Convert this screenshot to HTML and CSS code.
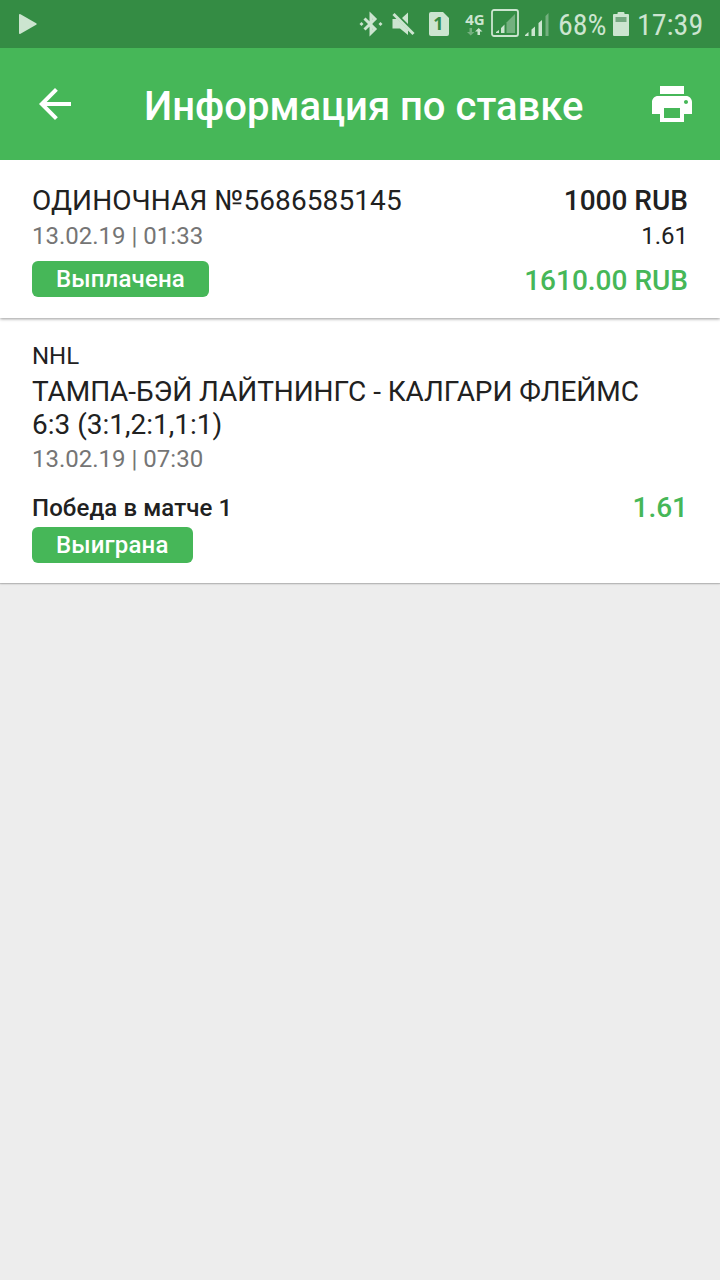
FILE: index.html
```html
<!DOCTYPE html>
<html lang="ru">
<head>
    <meta charset="UTF-8">
    <meta name="viewport" content="width=device-width, initial-scale=1.0">
    <title>Информация по ставке</title>
    <link rel="stylesheet" href="styles.css">
</head>
<body>
    <div class="status-bar">
        <svg class="play" width="20" height="22" viewBox="0 0 20 22"><path d="M1 2 Q1 0.5 2.5 1.2 L18.2 10.2 Q19.4 11 18.2 11.8 L2.5 20.8 Q1 21.5 1 20 Z"/></svg>
        <div class="status-icons">
            <svg class="bluetooth" width="24" height="26" viewBox="0 0 24 26">
                <path class="line" d="M5.5 7.5 L16 18 L12 22 V4 L16 8 L5.5 18.5"/>
                <path d="M0.5 13 L2.5 11 L4.5 13 L2.5 15 Z M19.5 13 L21.5 11 L23.5 13 L21.5 15 Z"/>
            </svg>
            <svg class="mute" width="24" height="26" viewBox="0 0 24 26">
                <path d="M0.5 8 H5 L16 19 V24 L8 17.5 H0.5 Z M16 1.5 V13 L10 7 Z"/>
                <path class="line" d="M1.5 3 L21.5 23"/>
            </svg>
            <svg class="sim" width="22" height="26" viewBox="0 0 22 26">
                <path d="M3 1 H15 L21 7 V23 Q21 25 19 25 H3 Q1 25 1 23 V3 Q1 1 3 1 Z"/>
                <text x="10.5" y="19" text-anchor="middle">1</text>
            </svg>
            <div class="network">
                <span>4G</span>
                <svg width="16" height="8" viewBox="0 0 16 8">
                    <path class="dim" d="M2.5 0 H5 V4 H7.5 L3.7 7.5 L0 4 H2.5 Z"/>
                    <path d="M10.5 7 H13 V3.5 H15.5 L11.7 0 L8 3.5 H10.5 Z"/>
                </svg>
            </div>
            <svg class="signal-box" width="28" height="28" viewBox="0 0 28 28">
                <rect class="frame" x="1" y="1" width="26" height="26" rx="2"/>
                <path d="M5 24 V23 L8 21 V24 Z M10 24 V19 L13.5 15.5 V24 Z"/>
                <path class="dim" d="M15.5 24 V13.5 L24 5 V24 Z"/>
            </svg>
            <svg class="signal" width="25" height="25" viewBox="0 0 25 25">
                <path d="M0 24 V23 L3.5 20 V24 Z M6.5 24 V17.5 L10 14.5 V24 Z M13.5 24 V11 L17 8 V24 Z"/>
                <path class="dim" d="M20.5 24 V4 L23.5 1 V24 Z"/>
            </svg>
            <span class="percent">68%</span>
            <svg class="battery" width="16" height="24" viewBox="0 0 16 24">
                <path d="M4.5 2 V1 Q4.5 0 5.5 0 H10.5 Q11.5 0 11.5 1 V2 H15 Q16 2 16 3 V23 Q16 24 15 24 H1 Q0 24 0 23 V3 Q0 2 1 2 Z"/>
                <rect class="empty" x="2.5" y="5" width="11" height="5"/>
            </svg>
            <span class="time">17:39</span>
        </div>
    </div>

    <header class="toolbar">
        <svg class="back" width="48" height="48" viewBox="0 0 24 24"><path d="M20 11H7.83l5.59-5.59L12 4l-8 8 8 8 1.41-1.41L7.83 13H20v-2z"/></svg>
        <h1>Информация по ставке</h1>
        <svg class="print" width="48" height="48" viewBox="0 0 24 24"><path d="M19 8H5c-1.66 0-3 1.34-3 3v6h4v4h12v-4h4v-6c0-1.66-1.34-3-3-3zm-3 11H8v-5h8v5zm3-7c-.55 0-1-.45-1-1s.45-1 1-1 1 .45 1 1-.45 1-1 1zm-1-9H6v4h12V3z"/></svg>
    </header>

    <section class="card bet">
        <div class="bet-info">
            <div class="big number">ОДИНОЧНАЯ №5686585145</div>
            <div class="date">13.02.19 | 01:33</div>
            <span class="badge">Выплачена</span>
        </div>
        <div class="bet-sums">
            <div class="big medium">1000 RUB</div>
            <div class="odds">1.61</div>
            <div class="big medium win">1610.00 RUB</div>
        </div>
    </section>

    <section class="card event">
        <div class="league">NHL</div>
        <div class="big teams">ТАМПА-БЭЙ ЛАЙТНИНГС - КАЛГАРИ ФЛЕЙМС<br><span class="score">6:3 (3:1,2:1,1:1)</span></div>
        <div class="date">13.02.19 | 07:30</div>
        <div class="outcome">
            <span class="medium pick">Победа в матче 1</span>
            <span class="big medium win">1.61</span>
        </div>
        <span class="badge">Выиграна</span>
    </section>
</body>
</html>
```

FILE: styles.css
```css
body {
    margin: 0;
    min-height: 100vh;
    background-color: #ededed;
    font-family: Roboto, sans-serif;
    font-size: 24px;
    line-height: 28px;
    color: #212121;
}
svg {
    display: block;
    flex-shrink: 0;
}
.status-bar {
    display: flex;
    justify-content: space-between;
    align-items: center;
    height: 48px;
    padding: 0 16px 0 18px;
    box-sizing: border-box;
    background-color: #348c44;
    color: #cce5d0;
    fill: #cce5d0;
}
.status-icons {
    display: flex;
    align-items: center;
}
.status-icons .line {
    fill: none;
    stroke: #cce5d0;
    stroke-width: 3;
}
.status-icons .dim {
    fill: #74b07f;
}
.mute {
    margin-left: 9px;
}
.sim {
    margin-left: 12px;
}
.sim text {
    font: bold 18px "Noto Sans", sans-serif;
    fill: #348c44;
}
.network {
    display: flex;
    flex-direction: column;
    align-items: center;
    width: 22px;
    margin-left: 14px;
}
.network span {
    margin-top: -2px;
    font: bold 15px/16px "Noto Sans", sans-serif;
}
.network svg {
    margin-top: 1px;
}
.signal-box {
    margin-left: 5px;
    margin-bottom: 2px;
}
.frame {
    fill: none;
    stroke: #cce5d0;
    stroke-width: 1.8;
}
.signal {
    margin-left: 6px;
}
.percent,
.time {
    padding-top: 2px;
    font-family: "Roboto Condensed", Roboto, sans-serif;
    font-size: 30px;
    font-stretch: 75%;
    white-space: nowrap;
}
.percent {
    width: 48px;
    margin-left: 8px;
}
.battery {
    margin-left: 7px;
}
.empty {
    fill: #74a880;
}
.time {
    width: 67px;
    margin-left: 8px;
}
.toolbar {
    position: relative;
    z-index: 2;
    display: flex;
    align-items: center;
    height: 112px;
    padding: 0 24px 0 31px;
    box-sizing: border-box;
    background-color: #46b758;
    fill: #fff;
}
.toolbar h1 {
    flex: 1;
    margin: 0 0 0 65px;
    padding-top: 5px;
    font-size: 40px;
    font-weight: 500;
    line-height: 48px;
    color: #fff;
}
.card {
    position: relative;
    background-color: #fff;
    box-shadow: 0 1px 3px rgba(0, 0, 0, 0.4);
}
.bet {
    display: flex;
    justify-content: space-between;
    height: 158px;
    padding: 24px 32px 0;
    box-sizing: border-box;
    z-index: 1;
}
.bet-sums {
    text-align: right;
}
.big {
    font-size: 28px;
    line-height: 33px;
}
.number {
    letter-spacing: 0.1px;
}
.medium {
    font-weight: 500;
}
.pick {
    letter-spacing: 0.1px;
}
.win {
    color: #46b758;
}
.date {
    color: #757575;
}
.bet .date,
.odds {
    margin-top: 5px;
}
.bet-sums .win {
    margin-top: 14px;
}
.badge {
    display: inline-block;
    padding: 4px 24px;
    border-radius: 6px;
    background-color: #46b758;
    color: #fff;
    font-weight: 500;
    letter-spacing: 0.15px;
}
.bet .badge {
    margin-top: 11px;
}
.event {
    height: 265px;
    padding: 24px 32px 0;
    box-sizing: border-box;
    box-shadow: 0 1px 1px rgba(0, 0, 0, 0.15), 0 1px 2px rgba(0, 0, 0, 0.12);
}
.teams {
    margin: 5px 0 4px;
    letter-spacing: -0.07px;
}
.score {
    letter-spacing: 0;
}
.outcome {
    display: flex;
    justify-content: space-between;
    height: 33px;
    margin: 18px 0 3px;
}
.outcome .pick {
    margin-top: 3px;
}
```
